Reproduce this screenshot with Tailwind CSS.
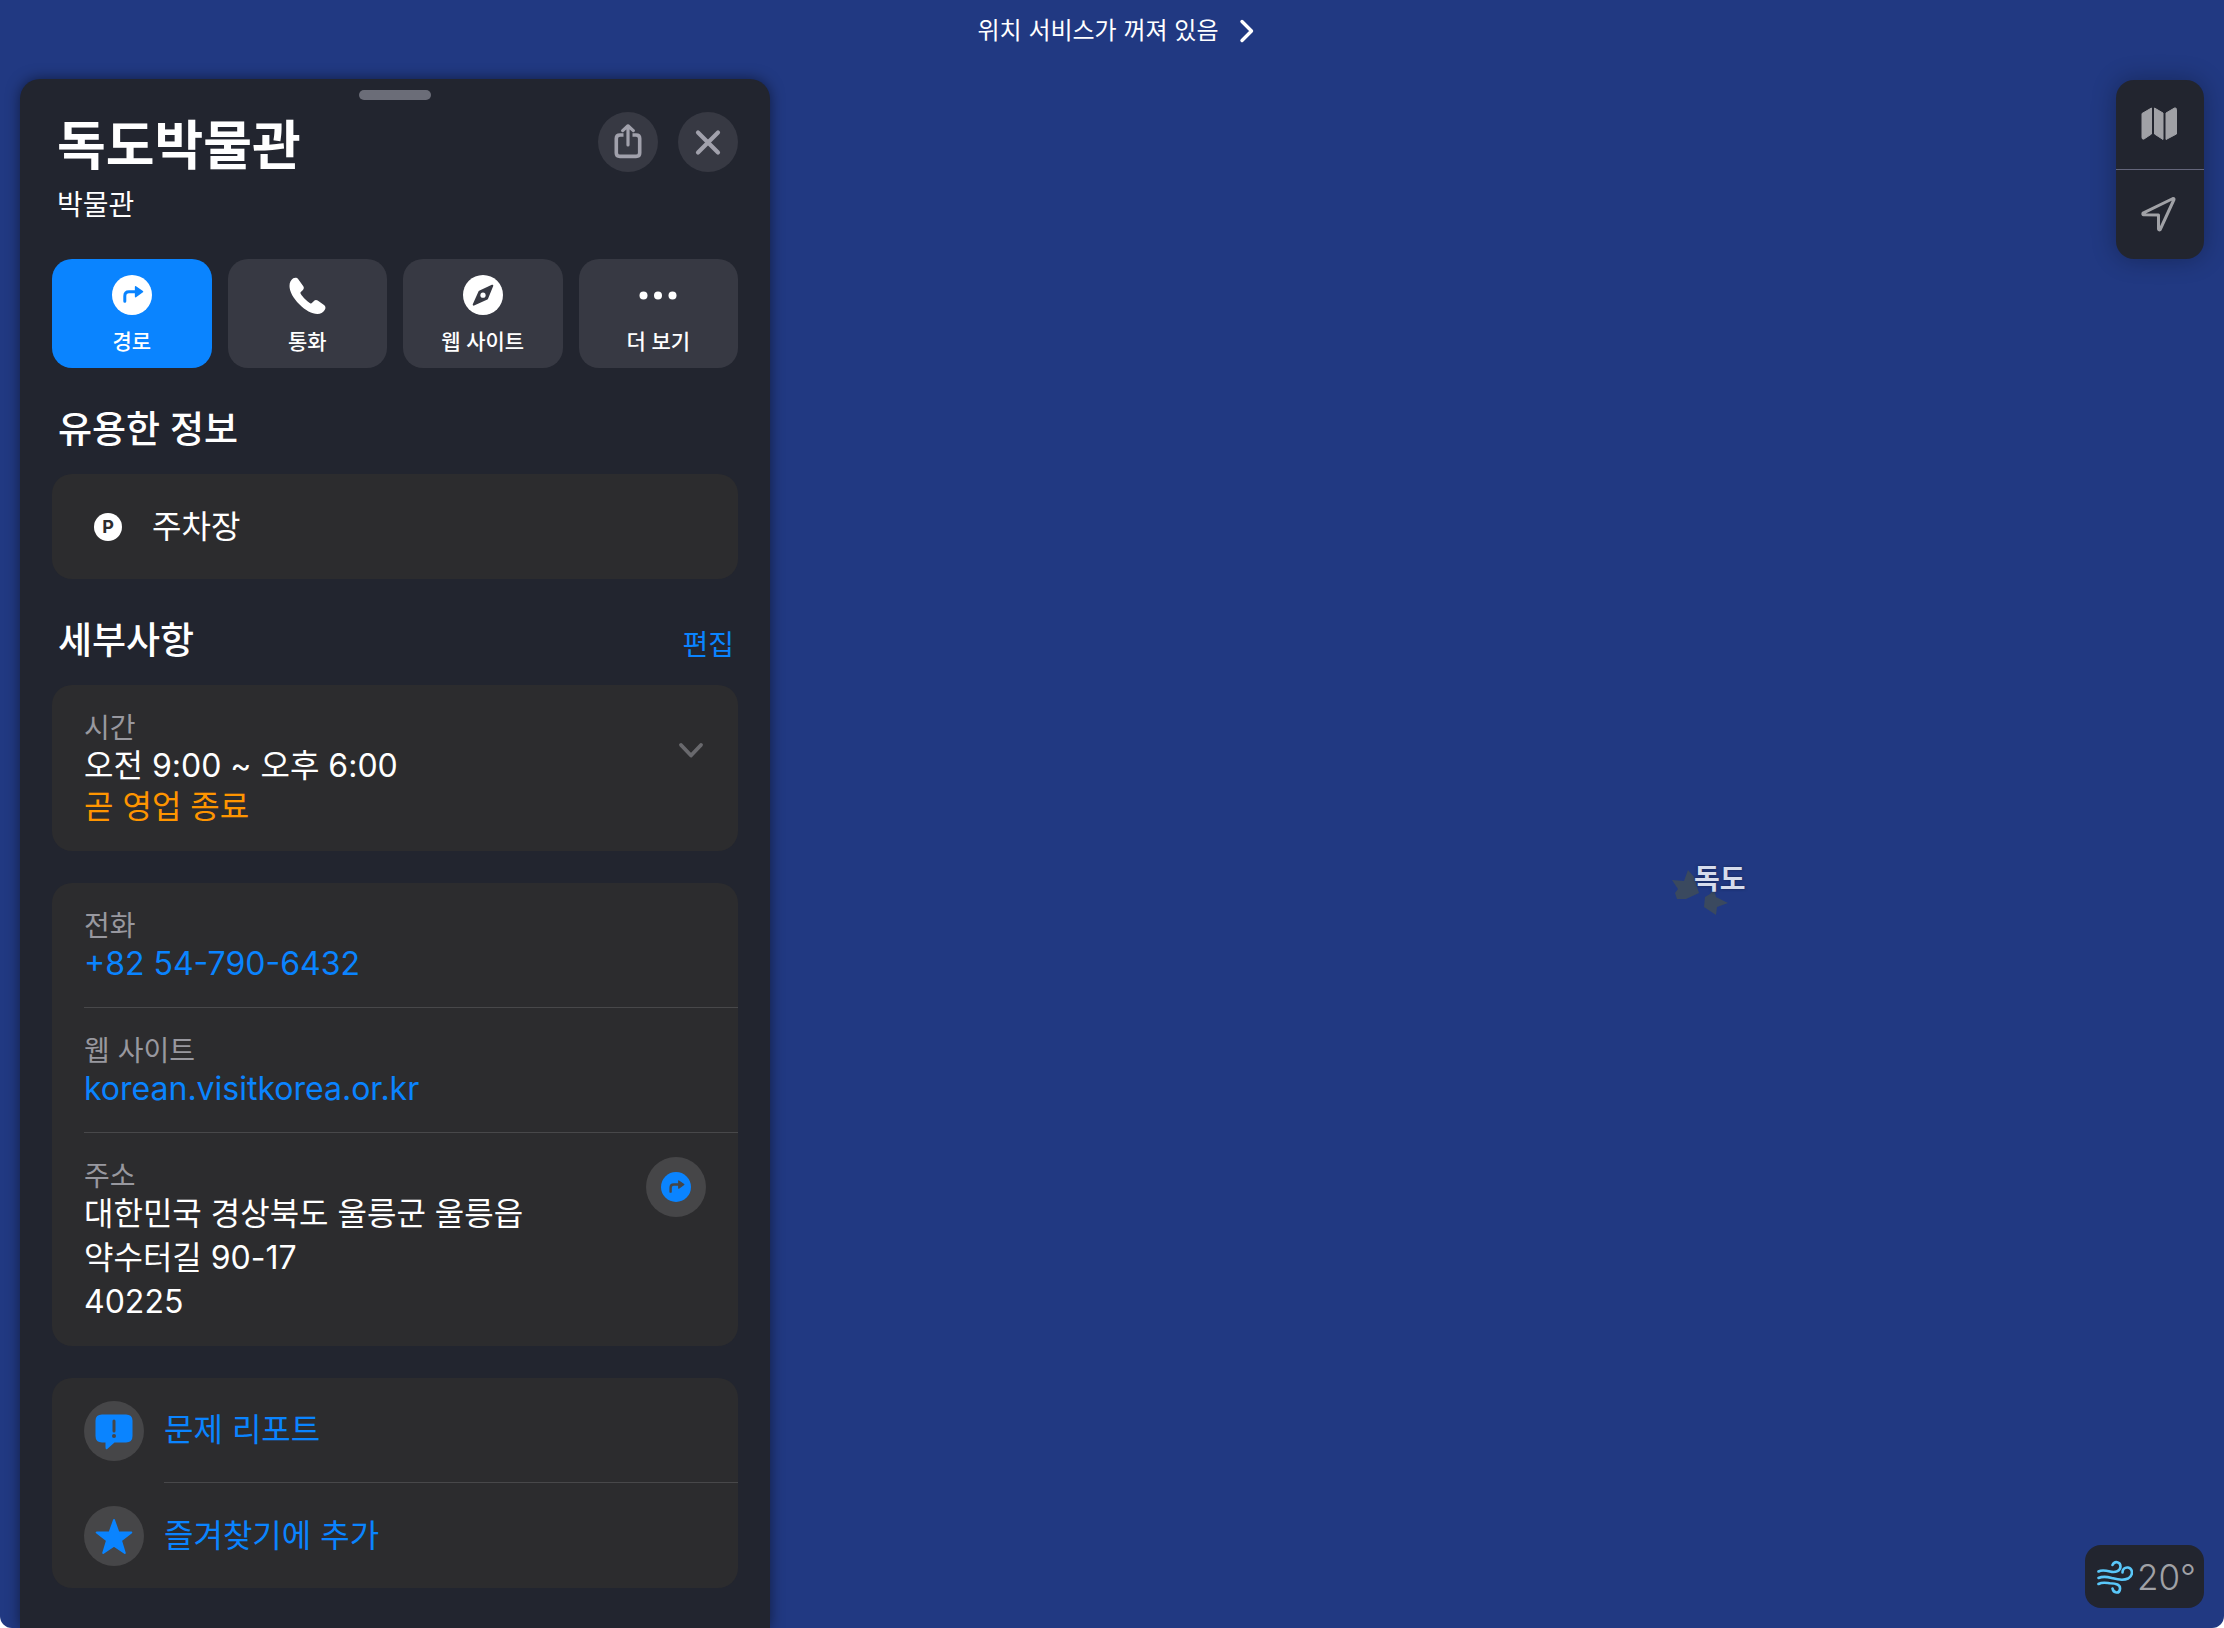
<!DOCTYPE html>
<html lang="ko">
<head>
    <meta charset="UTF-8">
    <meta name="viewport" content="width=device-width, initial-scale=1.0">
    <title>지도 - 독도박물관</title>
    <script src="https://cdn.jsdelivr.net/npm/@tailwindcss/browser@4"></script>
</head>
<body class="bg-white font-['Inter','Noto_Sans_CJK_KR',sans-serif] text-white">
    <!-- Map -->
    <main class="relative min-h-screen flex items-start justify-between bg-[#213982] rounded-b-xl overflow-hidden px-5 pt-[79px]">

        <!-- Location services notice -->
        <div class="absolute inset-x-0 top-0 h-[62px] pl-2 flex items-center justify-center">
            <a href="#" class="flex items-center gap-5 text-[24px] leading-8">
                위치 서비스가 꺼져 있음
                <svg class="w-4 h-6" viewBox="0 0 16 24" fill="none" stroke="currentColor" stroke-width="3.4" stroke-linecap="round" stroke-linejoin="round"><path d="M3 2.5 12.5 12 3 21.5"/></svg>
            </a>
        </div>

        <!-- Island label -->
        <div class="absolute left-[1672px] top-[859px] flex">
            <svg class="w-14 h-14" viewBox="0 0 56 56" fill="#3a495f">
                <path d="M0 21 12 22 16 11 22 18 27 34 14 40 5 40 3 34 6 30Z"/>
                <path d="M33 38 38 35 42 30 44 38 56 44 45 48 44 56 32 48Z"/>
            </svg>
            <span class="-ml-[34px] text-[28px] leading-10 font-bold text-[#d6dcec] text-shadow-[0_0_3px_#142350]">독도</span>
        </div>

        <!-- Place card -->
        <section class="w-[750px] min-h-[calc(100vh-79px)] px-8 pt-[11px] pb-10 bg-[#22252f] rounded-t-[20px] shadow-[0_0_14px_rgba(0,0,0,0.5)]">
            <div class="mx-auto w-18 h-[10px] rounded-full bg-[#6b6d78]"></div>

            <div class="mt-3 flex justify-between">
                <div class="pt-0.5 pl-[5px]">
                    <h1 class="text-[53px] leading-[64px] font-bold">독도박물관</h1>
                    <p class="text-[28px] leading-[54px]">박물관</p>
                </div>
                <div class="flex gap-5">
                    <button type="button" aria-label="공유" class="size-[60px] rounded-full bg-[#373943] text-[#a1a1ac] flex items-center justify-center">
                        <svg class="w-[30px] h-9" viewBox="0 0 30 36" fill="none" stroke="currentColor" stroke-width="3.6" stroke-linecap="round" stroke-linejoin="round">
                            <path stroke-linecap="butt" d="M10.5 11H7Q3.3 11 3.3 14.5V29Q3.3 32.4 7 32.4H23Q26.7 32.4 26.7 29V14.5Q26.7 11 23 11H19.5"/>
                            <path stroke-width="3.2" d="M15 21V1.8M9.7 6.6 15 1.8 20.3 6.6"/>
                        </svg>
                    </button>
                    <button type="button" aria-label="닫기" class="size-[60px] rounded-full bg-[#373943] text-[#a1a1ac] flex items-center justify-center">
                        <svg class="size-7" viewBox="0 0 28 28" fill="none" stroke="currentColor" stroke-width="4.2" stroke-linecap="round"><path d="M4 4.5 24 24.5M24 4.5 4 24.5"/></svg>
                    </button>
                </div>
            </div>

            <!-- Actions -->
            <div class="mt-[27px] grid grid-cols-4 gap-4 text-[21px] leading-7 font-medium">
                <button type="button" class="h-[109px] rounded-[20px] bg-[#0a84ff] flex flex-col items-center pt-4">
                    <svg class="size-10" viewBox="0 0 40 40">
                        <circle cx="20" cy="20" r="20" fill="#fff"/>
                        <path d="M12.8 26.2V21Q12.8 16.7 17 16.7H24" fill="none" stroke="#0a84ff" stroke-width="3" stroke-linecap="round"/>
                        <path d="M23.6 11.8 30.5 16.7 23.6 21.6Z" fill="#0a84ff" stroke="#0a84ff" stroke-width="1.5" stroke-linejoin="round"/>
                    </svg>
                    <span class="mt-[13px]">경로</span>
                </button>
                <button type="button" class="h-[109px] rounded-[20px] bg-[#373943] flex flex-col items-center pt-4">
                    <svg class="size-10" viewBox="0 0 40 40" fill="#fff"><path d="M6.2 3.3C8 2.3 10 2.4 11.3 4.2L16.3 11.3C17.2 12.7 16.900 14 15.7 15.2L13.8 17C13.3 17.6 13.3 18.1 13.7 18.8C14.8 20.7 16.5 22.7 18.2 24.3C19.9 25.9 21.5 27.2 23.1 28.2C23.8 28.6 24.4 28.6 24.9 28.1L26.7 26.2C27.9 25 29.3 24.7 30.7 25.6L37 30C38.7 31.2 38.9 33.3 37.7 35C36 37.6 33.6 38.9 30.4 39C24.8 39 18.5 35.5 12.3 29.3C6.2 23.1 2.5 16.5 2.5 11C2.5 7.6 3.8 4.9 6.2 3.3Z"/></svg>
                    <span class="mt-[13px]">통화</span>
                </button>
                <button type="button" class="h-[109px] rounded-[20px] bg-[#373943] flex flex-col items-center pt-4">
                    <svg class="size-10" viewBox="0 0 40 40">
                        <circle cx="20" cy="20" r="20" fill="#fff"/>
                        <path d="M29.300 10.700 16.500 16.700 10.700 29.700 24 23.700Z" fill="#373943" stroke="#373943" stroke-width="2" stroke-linejoin="round"/>
                        <circle cx="20" cy="20.200" r="2.600" fill="#fff"/>
                    </svg>
                    <span class="mt-[13px]">웹 사이트</span>
                </button>
                <button type="button" class="h-[109px] rounded-[20px] bg-[#373943] flex flex-col items-center pt-4">
                    <svg class="size-10" viewBox="0 0 40 40" fill="#fff"><circle cx="5.5" cy="20.5" r="4"/><circle cx="20" cy="20.5" r="4"/><circle cx="34.5" cy="20.5" r="4"/></svg>
                    <span class="mt-[13px]">더 보기</span>
                </button>
            </div>

            <!-- Good to know -->
            <h2 class="mt-10 pl-1.5 text-[37px] leading-11 font-medium">유용한 정보</h2>
            <div class="mt-[22px] h-[105px] px-[42px] flex items-center gap-[30px] rounded-[20px] bg-[#2c2c2e] text-[32px] leading-11">
                <span class="size-7 rounded-full bg-white text-[#2c2c2e] text-[18px] leading-7 font-bold text-center">P</span>
                <span>주차장</span>
            </div>

            <!-- Details -->
            <div class="mt-10 pl-1.5 pr-1 flex items-end justify-between">
                <h2 class="text-[37px] leading-11 font-medium">세부사항</h2>
                <a href="#" class="text-[28px] leading-9 text-[#0a84ff]">편집</a>
            </div>
            <div class="mt-[22px] px-8 pt-[27px] pb-[25px] flex justify-between rounded-[20px] bg-[#2c2c2e]">
                <div>
                    <p class="text-[28px] leading-8 text-[#98989f]">시간</p>
                    <p class="text-[32px] leading-11">오전 9:00 ~ 오후 6:00</p>
                    <p class="text-[32px] leading-[38px] text-[#ff9500]">곧 영업 종료</p>
                </div>
                <button type="button" aria-label="영업시간 펼치기" class="h-[76px] flex items-center text-[#69696d]">
                    <svg class="w-[30px] h-5" viewBox="0 0 30 20" fill="none" stroke="currentColor" stroke-width="3.8" stroke-linecap="round" stroke-linejoin="round"><path d="M5 5 15 15.5 25 5"/></svg>
                </button>
            </div>

            <div class="mt-8 pl-8 rounded-[20px] bg-[#2c2c2e]">
                <div class="pt-[27px] pb-[21px] border-b border-[#48484a]">
                    <p class="text-[28px] leading-8 text-[#98989f]">전화</p>
                    <a href="tel:+82547906432" class="block text-[32px] leading-11 text-[#0a84ff]">+82 54-790-6432</a>
                </div>
                <div class="pt-[27px] pb-[21px] border-b border-[#48484a]">
                    <p class="text-[28px] leading-8 text-[#98989f]">웹 사이트</p>
                    <a href="#" class="block text-[32px] leading-11 text-[#0a84ff]">korean.visitkorea.or.kr</a>
                </div>
                <div class="pt-[27px] pb-[22px] pr-8 flex items-start justify-between">
                    <div>
                        <p class="text-[28px] leading-8 text-[#98989f]">주소</p>
                        <address class="text-[32px] leading-11 not-italic">대한민국 경상북도 울릉군 울릉읍<br>약수터길 90-17<br>40225</address>
                    </div>
                    <button type="button" aria-label="경로" class="-mt-[3px] size-[60px] rounded-full bg-[#464648] flex items-center justify-center">
                        <svg class="size-[30px]" viewBox="0 0 40 40">
                            <circle cx="20" cy="20" r="20" fill="#0a84ff"/>
                            <path d="M12.8 26.2V21Q12.8 16.7 17 16.7H24" fill="none" stroke="#464648" stroke-width="3.2" stroke-linecap="round"/>
                            <path d="M23.6 11.8 30.5 16.7 23.6 21.6Z" fill="#464648" stroke="#464648" stroke-width="1.5" stroke-linejoin="round"/>
                        </svg>
                    </button>
                </div>
            </div>

            <div class="mt-8 pl-8 rounded-[20px] bg-[#2c2c2e] text-[32px] leading-11 text-[#0a84ff]">
                <a href="#" class="flex items-center gap-5">
                    <span class="size-[60px] rounded-full bg-[#464648] flex items-center justify-center">
                        <svg class="size-10" viewBox="0 0 40 40">
                            <path d="M8 3.5H32Q38.5 3.5 38.5 9.5V25Q38.5 31.5 32 31.5H20.5L13.5 37.8Q11.5 39.300 11.5 36.5V31.5H8Q1.5 31.5 1.5 25V9.5Q1.5 3.5 8 3.5Z" fill="#0a84ff"/>
                            <path d="M20 10V20" stroke="#464648" stroke-width="3" stroke-linecap="round"/>
                            <circle cx="20" cy="25" r="2" fill="#464648"/>
                        </svg>
                    </span>
                    <span class="grow h-[105px] flex items-center border-b border-[#48484a]">문제 리포트</span>
                </a>
                <a href="#" class="flex items-center gap-5">
                    <span class="size-[60px] rounded-full bg-[#464648] flex items-center justify-center">
                        <svg class="size-10" viewBox="0 0 40 40" fill="#0a84ff" stroke="#0a84ff" stroke-width="2" stroke-linejoin="round"><path d="M20 4 24.3 16.2 37.3 16.5 27 24.5 30.8 37 20 29.6 9.2 37 13 24.5 2.7 16.5 15.7 16.2Z"/></svg>
                    </span>
                    <span class="grow h-[105px] flex items-center">즐겨찾기에 추가</span>
                </a>
            </div>
        </section>

        <!-- Map controls -->
        <div class="mt-px w-[88px] rounded-[18px] overflow-hidden bg-[#22252f] text-[#a0a1a6] shadow-[0_0_24px_rgba(0,0,0,0.3)]">
            <button type="button" aria-label="지도 모드" class="w-full h-[90px] pr-0.5 pb-0.5 flex items-center justify-center border-b border-[#63657a]">
                <svg class="size-9" viewBox="0 0 36 36" fill="currentColor" stroke="currentColor" stroke-linejoin="round">
                    <path d="M1 7.5 10.5 2V28L3 33Q1 33.7 1 31.5Z"/>
                    <path d="M13.5 2 22 7V33.5L13.5 28Z"/>
                    <path d="M25 7 33.5 2Q35.5 1.5 35.5 3.5V28L25 33.5Z"/>
                </svg>
            </button>
            <button type="button" aria-label="현재 위치" class="w-full h-[89px] pr-0.5 pb-0.5 flex items-center justify-center">
                <svg class="size-9" viewBox="0 0 36 36" fill="none" stroke="currentColor" stroke-width="3" stroke-linejoin="round"><path d="M32 2.5 2 17.2Q1.5 18.5 2.5 18.8L17.5 19V33Q18 34.500 19.2 33.500L33 3.5Q33 2.300 32 2.5Z"/></svg>
            </button>
        </div>

        <!-- Weather -->
        <div class="absolute right-5 bottom-5 h-[63px] pl-3 pr-2 flex items-center gap-1 rounded-[16px] bg-[#22252f] text-[35px] leading-11 text-[#a0a1a6] font-light">
            <svg class="size-9" viewBox="0 0 36 36" fill="none" stroke="#5ac8fa" stroke-width="2.6" stroke-linecap="round">
                <path d="M1.5 12.5C5 10.5 9 11.5 13 12.5C19 14 23.5 11.5 23.5 7.5C23.5 2.5 17.5 1.5 15.5 6"/>
                <path d="M1.5 19C7 16.5 11 18 16 19.3C22 21 27 21.5 31 19.5C36.5 16.5 36 9.5 31 8.5C27.5 8 25.5 10.5 25.5 13.5"/>
                <path d="M1.5 25C6 22.5 10 24 13 24.3C19 24.5 23.5 25.5 23 30C22.5 35 16.5 34.5 15.5 29.5"/>
            </svg>
            <span>20°</span>
        </div>
    </main>
</body>
</html>
